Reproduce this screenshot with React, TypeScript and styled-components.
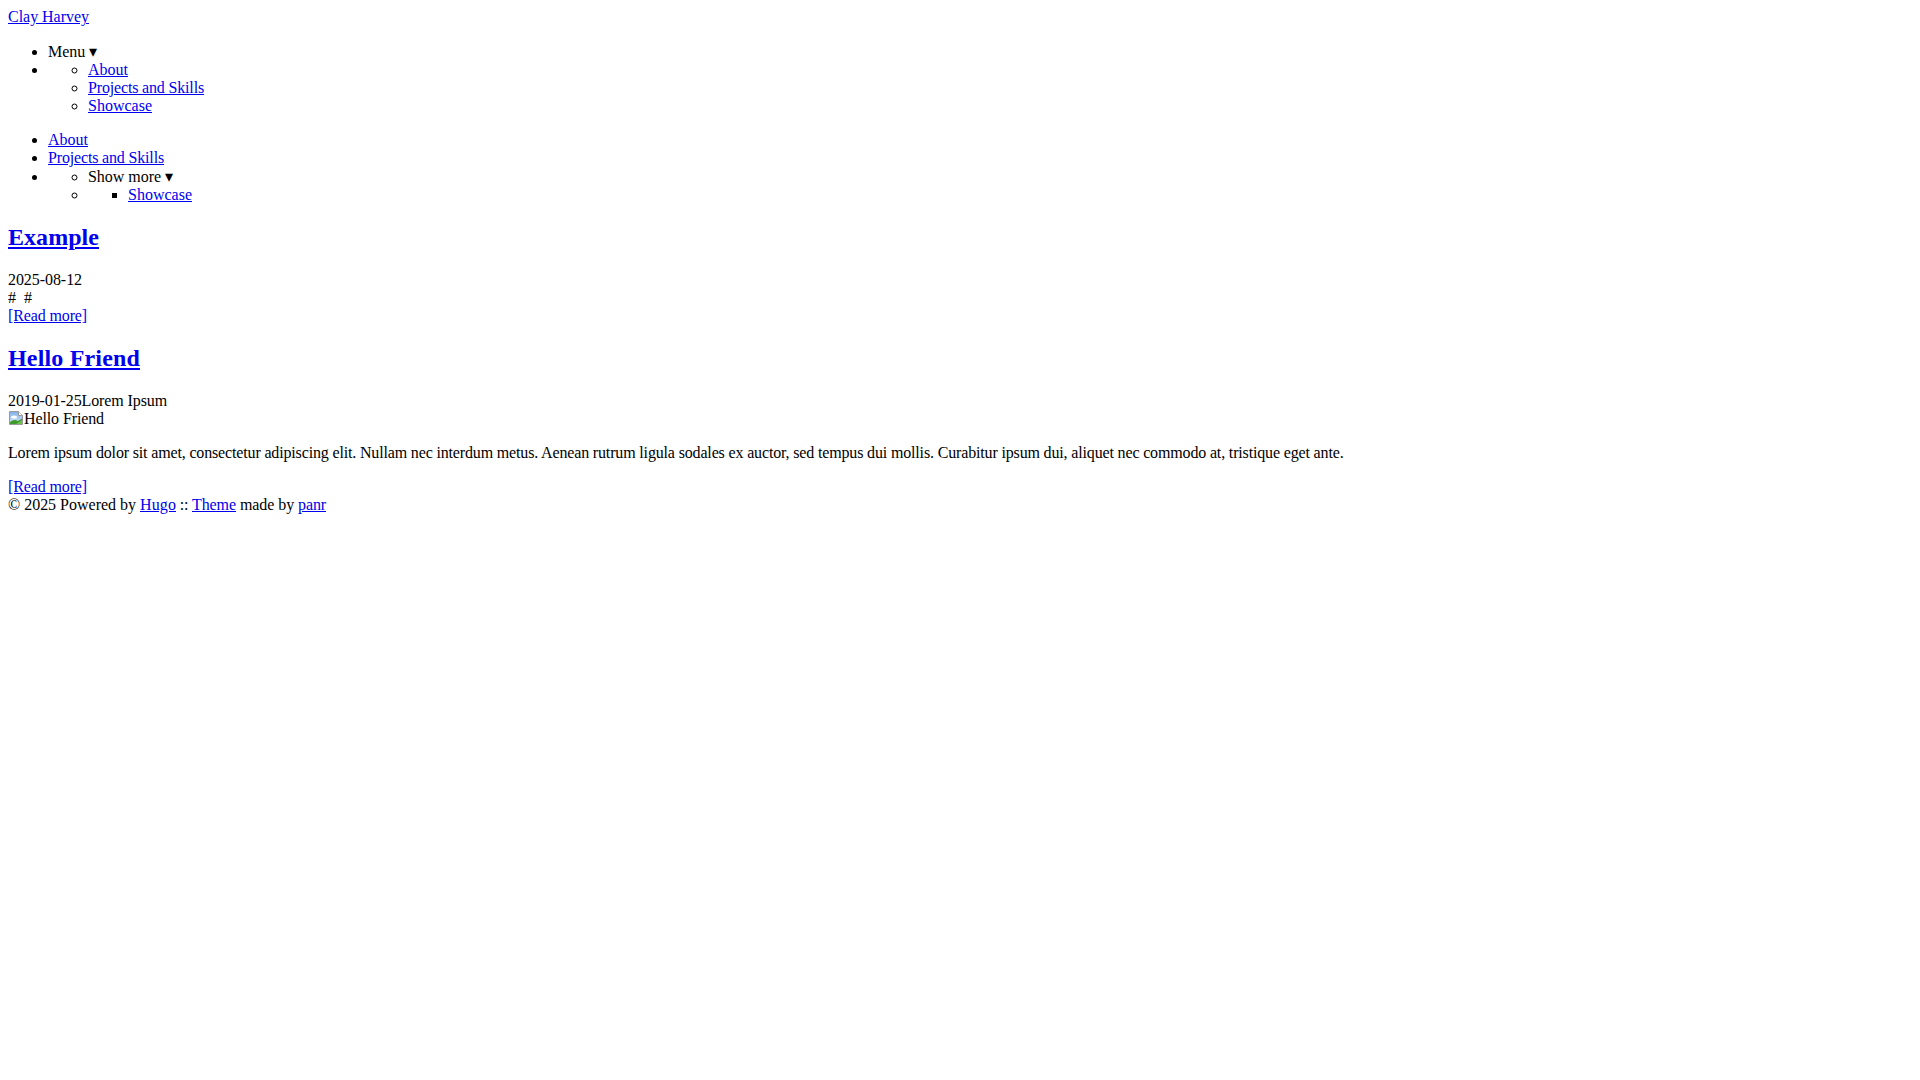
import React, { useMemo } from "react";
import styled, { createGlobalStyle } from "styled-components";

const SERIF = `"Liberation Serif", "Times New Roman", "DejaVu Serif", serif`;

const GlobalStyle = createGlobalStyle`
  html, body { background: #fff; }
  body {
    margin: 8px;
    font-family: ${SERIF};
    font-size: 16px;
    color: #000;
  }
`;

/* The reference was rendered with whole-pixel glyph advances; emulate that
   by spreading the rounding difference over the run as letter-spacing. */
let ctx: CanvasRenderingContext2D | null = null;
function pixelSnapSpacing(text: string, font: string): number {
  if (typeof document === "undefined") return 0;
  if (!ctx) ctx = document.createElement("canvas").getContext("2d");
  if (!ctx) return 0;
  ctx.font = font;
  let diff = 0;
  let n = 0;
  for (const ch of text) {
    const w = ctx.measureText(ch).width;
    diff += Math.round(w) - w;
    n += 1;
  }
  return n ? diff / n : 0;
}

const Run = styled.span``;

function T({ children, heading }: { children: string; heading?: boolean }) {
  const font = heading ? `bold 24px ${SERIF}` : `16px ${SERIF}`;
  const ls = useMemo(() => pixelSnapSpacing(children, font), [children, font]);
  return <Run style={{ letterSpacing: `${ls}px` }}>{children}</Run>;
}

const Link = styled.a`
  color: #0000ee;
  text-decoration: underline;
  cursor: pointer;
`;

const Header = styled.header`
  display: block;
`;

const Nav = styled.nav`
  display: block;
`;

const List = styled.ul<{ $type: "disc" | "circle" | "square"; $nested?: boolean }>`
  display: block;
  list-style-type: ${(p) => p.$type};
  margin: ${(p) => (p.$nested ? "0" : "16px 0")};
  padding-left: 40px;
`;

const Item = styled.li`
  display: list-item;
`;

const Trigger = styled.span`
  cursor: pointer;
`;

const Main = styled.main`
  display: block;
`;

const Article = styled.article`
  display: block;
`;

const Title = styled.h2`
  font-size: 24px;
  font-weight: bold;
  margin: 19.92px 0;
`;

const Line = styled.div`
  display: block;
`;

const Para = styled.p`
  margin: 16px 0;
`;

const Broken = styled.span`
  display: inline-block;
`;

const BrokenIcon = styled.svg`
  width: 16px;
  height: 16px;
  vertical-align: -2px;
`;

const Footer = styled.footer`
  display: block;
`;

function BrokenImage({ alt }: { alt: string }) {
  return (
    <Broken>
      <BrokenIcon viewBox="0 0 16 16">
        <defs>
          <linearGradient id="sky" x1="0" y1="0" x2="0" y2="1">
            <stop offset="0" stopColor="#7fb0e8" />
            <stop offset="1" stopColor="#dbe9f8" />
          </linearGradient>
        </defs>
        <path d="M1.5 1.5 H10.5 L14.5 5.5 V14.5 H1.5 Z" fill="url(#sky)" stroke="#9a9a9a" />
        <path d="M10.5 1.5 V5.5 H14.5" fill="#f4f4f4" stroke="#9a9a9a" />
        <ellipse cx="6" cy="7" rx="3" ry="1.6" fill="#ffffff" />
        <path d="M2 14 L2 12 Q6 8.5 10 11 L14 8.5 V14 Z" fill="#3f9a2e" />
        <path d="M8 14 L14 10 V14 Z" fill="#6cc24a" />
      </BrokenIcon>
      <T>{alt}</T>
    </Broken>
  );
}

const LOREM =
  "Lorem ipsum dolor sit amet, consectetur adipiscing elit. Nullam nec interdum metus. Aenean rutrum ligula sodales ex auctor, sed tempus dui mollis. Curabitur ipsum dui, aliquet nec commodo at, tristique eget ante.";

export default function App() {
  return (
    <>
      <GlobalStyle />
      <Header>
        <Link href="#"><T>Clay Harvey</T></Link>
        <Nav>
          <List $type="disc">
            <Item>
              <Trigger><T>Menu ▾</T></Trigger>
            </Item>
            <Item>
              <List $type="circle" $nested>
                <Item><Link href="#"><T>About</T></Link></Item>
                <Item><Link href="#"><T>Projects and Skills</T></Link></Item>
                <Item><Link href="#"><T>Showcase</T></Link></Item>
              </List>
            </Item>
          </List>
          <List $type="disc">
            <Item><Link href="#"><T>About</T></Link></Item>
            <Item><Link href="#"><T>Projects and Skills</T></Link></Item>
            <Item>
              <List $type="circle" $nested>
                <Item>
                  <Trigger><T>Show more ▾</T></Trigger>
                </Item>
                <Item>
                  <List $type="square" $nested>
                    <Item><Link href="#"><T>Showcase</T></Link></Item>
                  </List>
                </Item>
              </List>
            </Item>
          </List>
        </Nav>
      </Header>
      <Main>
        <Article>
          <Title><Link href="#"><T heading>Example</T></Link></Title>
          <Line><T>2025-08-12</T></Line>
          <Line><T>{"#\u00a0\u00a0#"}</T></Line>
          <Line><Link href="#"><T>[Read more]</T></Link></Line>
        </Article>
        <Article>
          <Title><Link href="#"><T heading>Hello Friend</T></Link></Title>
          <Line><T>2019-01-25Lorem Ipsum</T></Line>
          <Line><BrokenImage alt="Hello Friend" /></Line>
          <Para><T>{LOREM}</T></Para>
          <Line><Link href="#"><T>[Read more]</T></Link></Line>
        </Article>
      </Main>
      <Footer>
        <T>© 2025 Powered by </T>
        <Link href="#"><T>Hugo</T></Link>
        <T> :: </T>
        <Link href="#"><T>Theme</T></Link>
        <T> made by </T>
        <Link href="#"><T>panr</T></Link>
      </Footer>
    </>
  );
}
